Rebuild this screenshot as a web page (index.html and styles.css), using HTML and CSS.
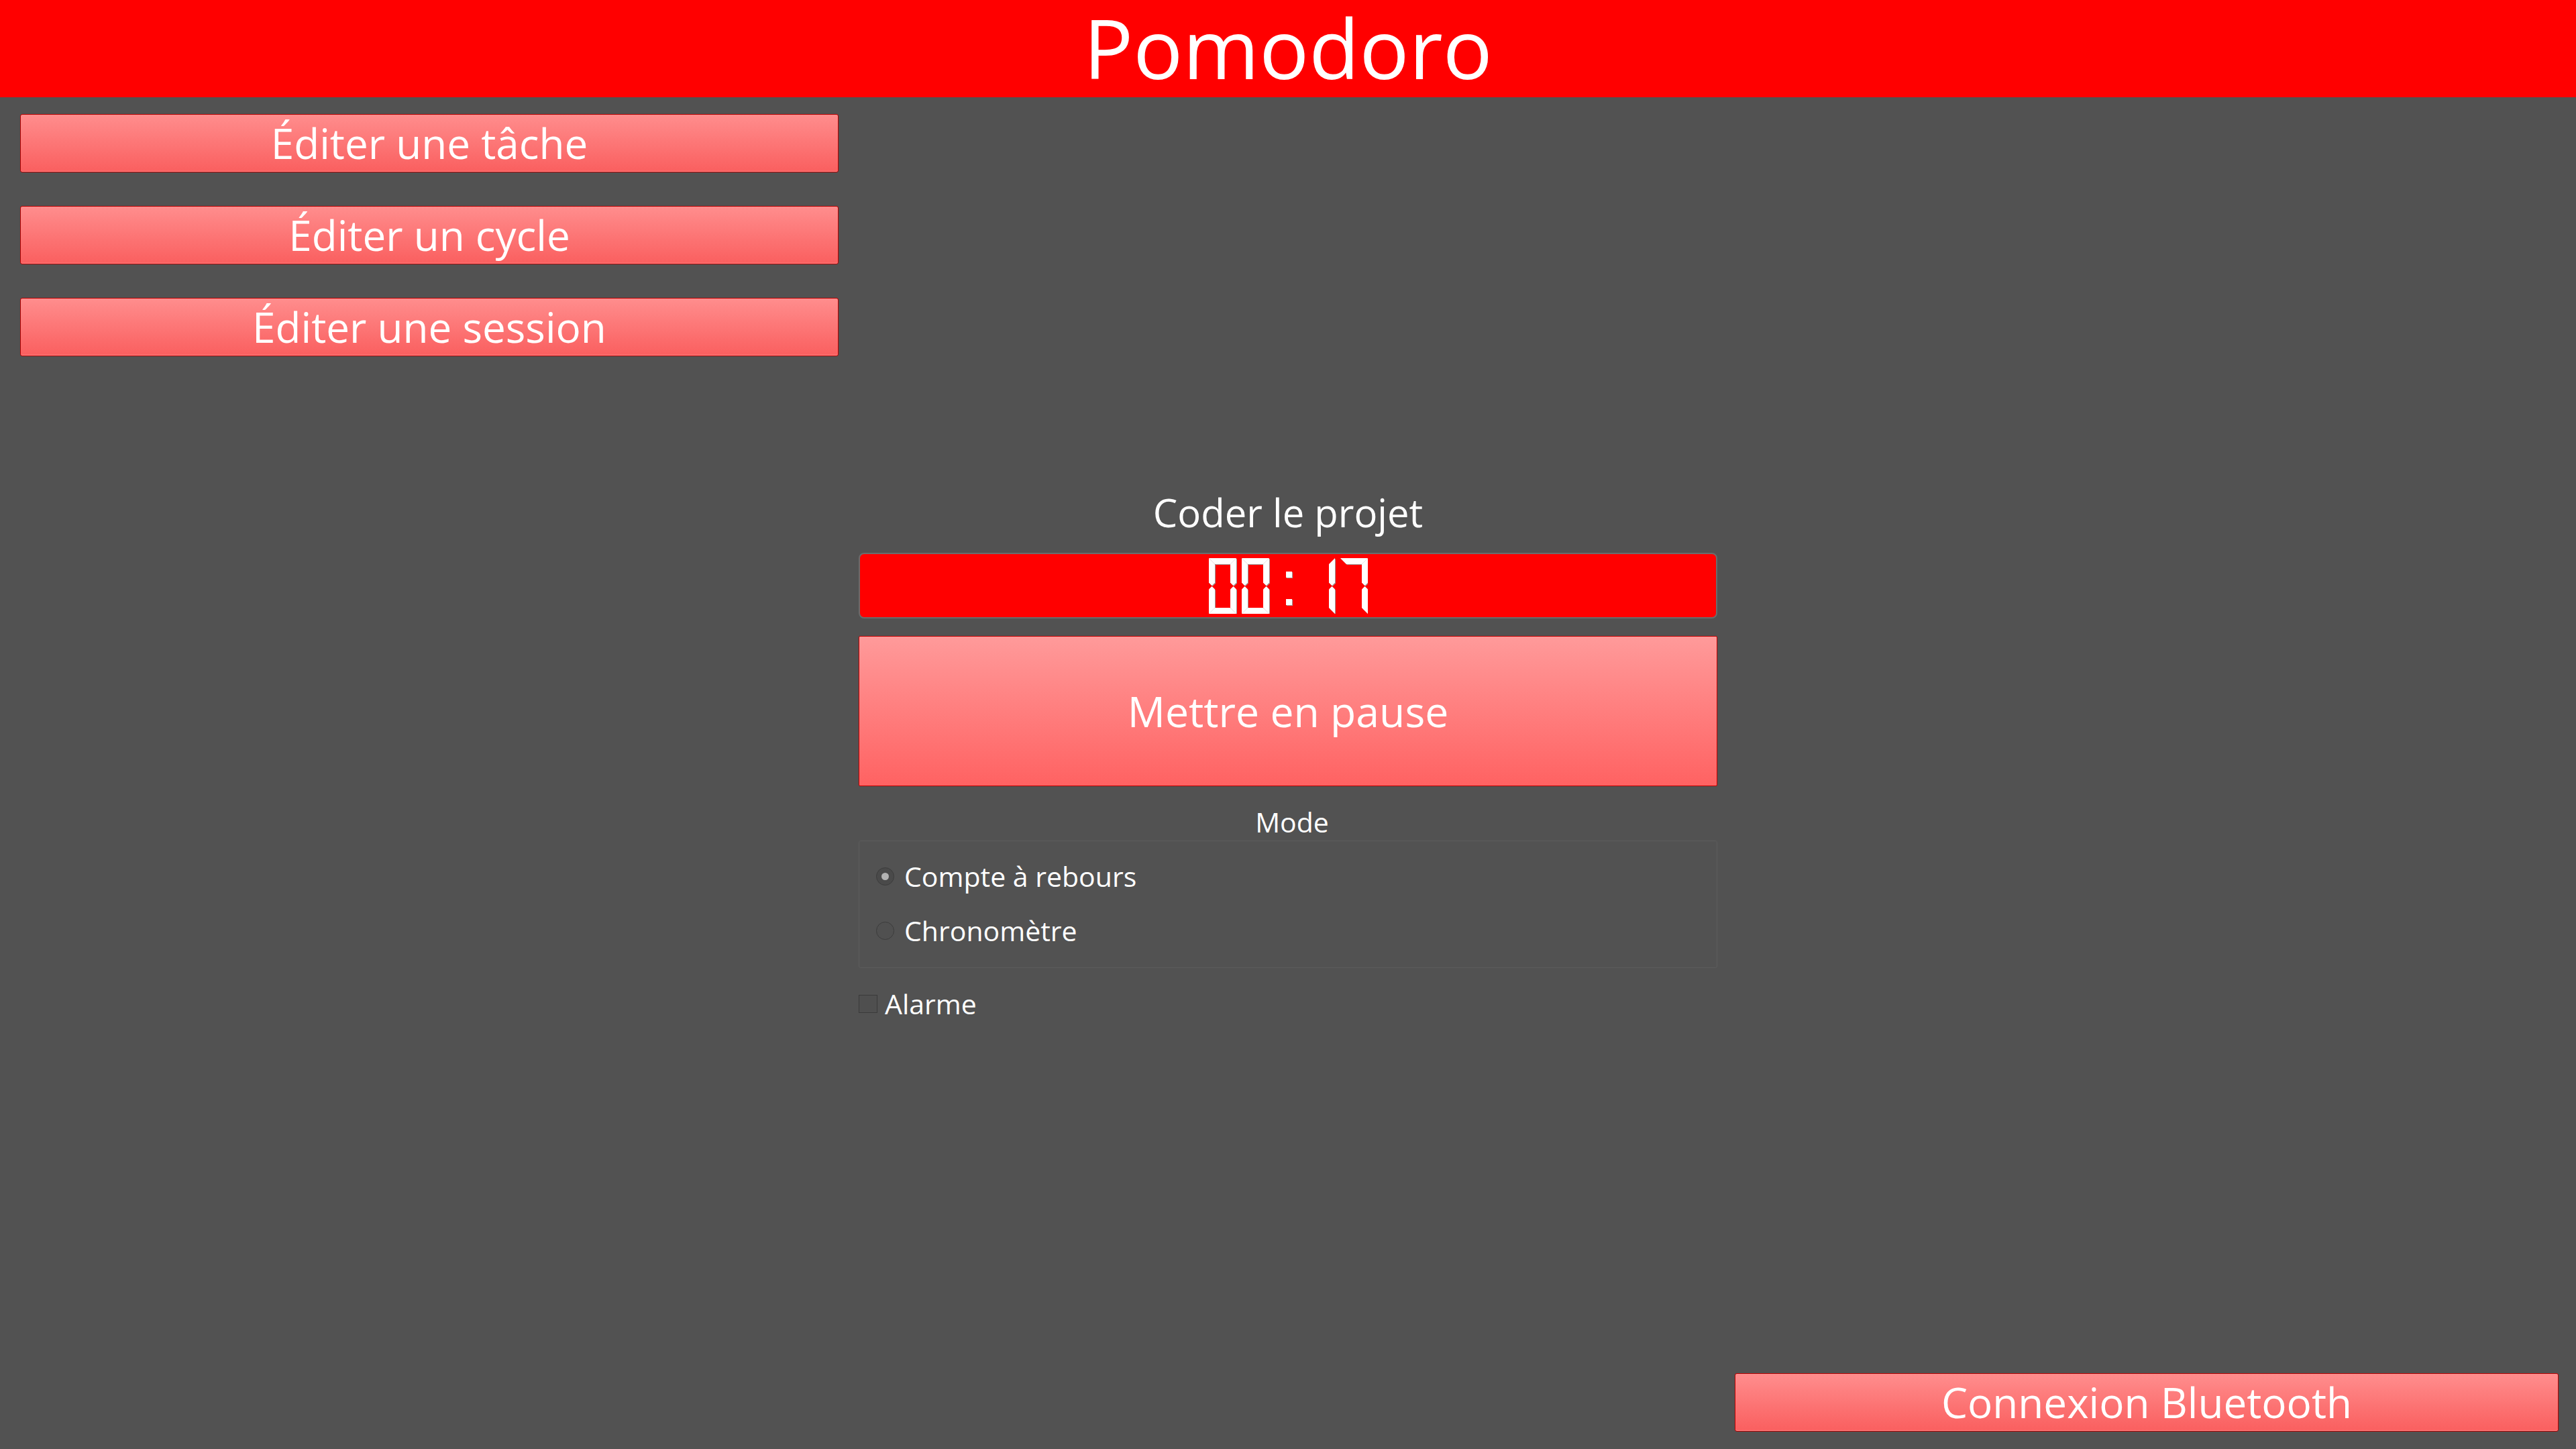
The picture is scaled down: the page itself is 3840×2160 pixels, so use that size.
FILE: index.html
```html
<!DOCTYPE html>
<html lang="fr">
<head>
<meta charset="utf-8">
<title>Pomodoro</title>
<link rel="stylesheet" href="styles.css">
</head>
<body>
<header class="title-bar">Pomodoro</header>
<main class="layout">
  <nav class="col-left">
    <button class="btn btn-side">Éditer une tâche</button>
    <button class="btn btn-side">Éditer un cycle</button>
    <button class="btn btn-side">Éditer une session</button>
  </nav>
  <section class="col-center">
    <div class="task-name">Coder le projet</div>
    <div class="lcd">
      <svg class="lcd-digits" width="237" height="83" viewBox="0 0 237 83" aria-label="00:17">
        <defs>
          <g id="seg-a"><polygon points="0,0 41,0 32,9 9,9"/></g>
          <g id="seg-b"><polygon points="41,0 41,36.5 36.5,41 32,36.5 32,9"/></g>
          <g id="seg-c"><polygon points="32,46.5 36.5,42 41,46.5 41,83 32,74"/></g>
          <g id="seg-d"><polygon points="9,74 32,74 41,83 0,83"/></g>
          <g id="seg-e"><polygon points="0,46.5 4.5,42 9,46.5 9,74 0,83"/></g>
          <g id="seg-f"><polygon points="0,0 9,9 9,36.5 4.5,41 0,36.5"/></g>
        </defs>
        <g class="seg">
          <g transform="translate(0,0)">
            <use href="#seg-a"/><use href="#seg-b"/><use href="#seg-c"/><use href="#seg-d"/><use href="#seg-e"/><use href="#seg-f"/>
          </g>
          <g transform="translate(49,0)">
            <use href="#seg-a"/><use href="#seg-b"/><use href="#seg-c"/><use href="#seg-d"/><use href="#seg-e"/><use href="#seg-f"/>
          </g>
          <g transform="translate(98,0)">
            <rect x="17" y="20" width="9" height="9"/>
            <rect x="17" y="61" width="9" height="9"/>
          </g>
          <g transform="translate(147,0)">
            <use href="#seg-b"/><use href="#seg-c"/>
          </g>
          <g transform="translate(196,0)">
            <use href="#seg-a"/><use href="#seg-b"/><use href="#seg-c"/>
          </g>
        </g>
      </svg>
    </div>
    <button class="btn btn-pause">Mettre en pause</button>
    <div class="mode-label">Mode</div>
    <div class="mode-group">
      <div class="radio-row"><span class="radio radio-checked"></span><span>Compte à rebours</span></div>
      <div class="radio-row"><span class="radio"></span><span>Chronomètre</span></div>
    </div>
    <div class="check-row"><span class="checkbox"></span><span>Alarme</span></div>
  </section>
  <aside class="col-right">
    <button class="btn btn-side">Connexion Bluetooth</button>
  </aside>
</main>
</body>
</html>
```
FILE: styles.css
```css
html, body {
  margin: 0;
  padding: 0;
}

body {
  width: 3840px;
  height: 2160px;
  overflow: hidden;
  background: #525252;
  color: #ffffff;
  font-family: "Open Sans", "Noto Sans", sans-serif;
}

.title-bar {
  height: 145px;
  background: #ff0000;
  text-align: center;
  font-size: 123px;
  line-height: 142px;
}

.layout {
  display: grid;
  grid-template-columns: 1220px 30px 1280px 26px 1228px;
  padding-left: 30px;
  height: 2015px;
}

.btn {
  font-family: inherit;
  color: #ffffff;
  padding: 0;
  margin: 0;
  box-sizing: border-box;
  cursor: pointer;
}

.col-left {
  grid-column: 1;
  display: flex;
  flex-direction: column;
  gap: 50px;
  padding-top: 25px;
}

.btn-side {
  width: 100%;
  height: 87px;
  border: 1px solid #b30000;
  border-radius: 3px;
  background: linear-gradient(#ff8d8d, #fa5f5f);
  box-shadow: inset 0 -1px 0 #ff8a8a;
  font-size: 62px;
  line-height: 85px;
}

.col-center {
  grid-column: 3;
  display: flex;
  flex-direction: column;
  padding-top: 583px;
}

.task-name {
  text-align: center;
  font-size: 58px;
  line-height: 72px;
  margin-bottom: 24px;
}

.lcd {
  box-sizing: border-box;
  height: 98px;
  border: 2px solid #6b6b6b;
  border-radius: 8px;
  background: #ff0000;
  display: flex;
  align-items: center;
  justify-content: center;
}

.lcd-digits {
  display: block;
}

.seg {
  fill: #ffffff;
  filter: drop-shadow(1px 1px 0 #9a9a9a);
}

.btn-pause {
  margin-top: 26px;
  width: 100%;
  height: 224px;
  border: 1px solid #c00000;
  border-radius: 2px;
  background: linear-gradient(#ff9a9a, #ff6262);
  font-size: 62.5px;
  line-height: 220px;
}

.mode-label {
  margin-top: 28px;
  padding-left: 12px;
  text-align: center;
  font-size: 41px;
  line-height: 50px;
}

.mode-group {
  box-sizing: border-box;
  margin-top: 3px;
  height: 190px;
  border: 1px solid #5c5c5c;
  border-radius: 3px;
  padding: 25px 0 0 25px;
  display: flex;
  flex-direction: column;
  gap: 27px;
}

.radio-row {
  display: flex;
  align-items: center;
  gap: 15px;
  font-size: 41px;
  line-height: 54px;
}

.radio {
  box-sizing: border-box;
  width: 27px;
  height: 27px;
  border-radius: 50%;
  border: 1px solid #3c3c3c;
  background: #505050;
  display: flex;
  align-items: center;
  justify-content: center;
}

.radio-checked {
  background: #4a4a4a;
}

.radio-checked::after {
  content: "";
  width: 11px;
  height: 11px;
  border-radius: 50%;
  background: #b3b3b3;
}

.check-row {
  margin-top: 26px;
  display: flex;
  align-items: center;
  gap: 11px;
  font-size: 41px;
  line-height: 54px;
}

.checkbox {
  box-sizing: border-box;
  width: 28px;
  height: 27px;
  border: 1px solid #3a3a3a;
  background: #4f4f4f;
}

.col-right {
  grid-column: 5;
  display: flex;
  flex-direction: column;
  justify-content: flex-end;
  padding-bottom: 26px;
}
```
